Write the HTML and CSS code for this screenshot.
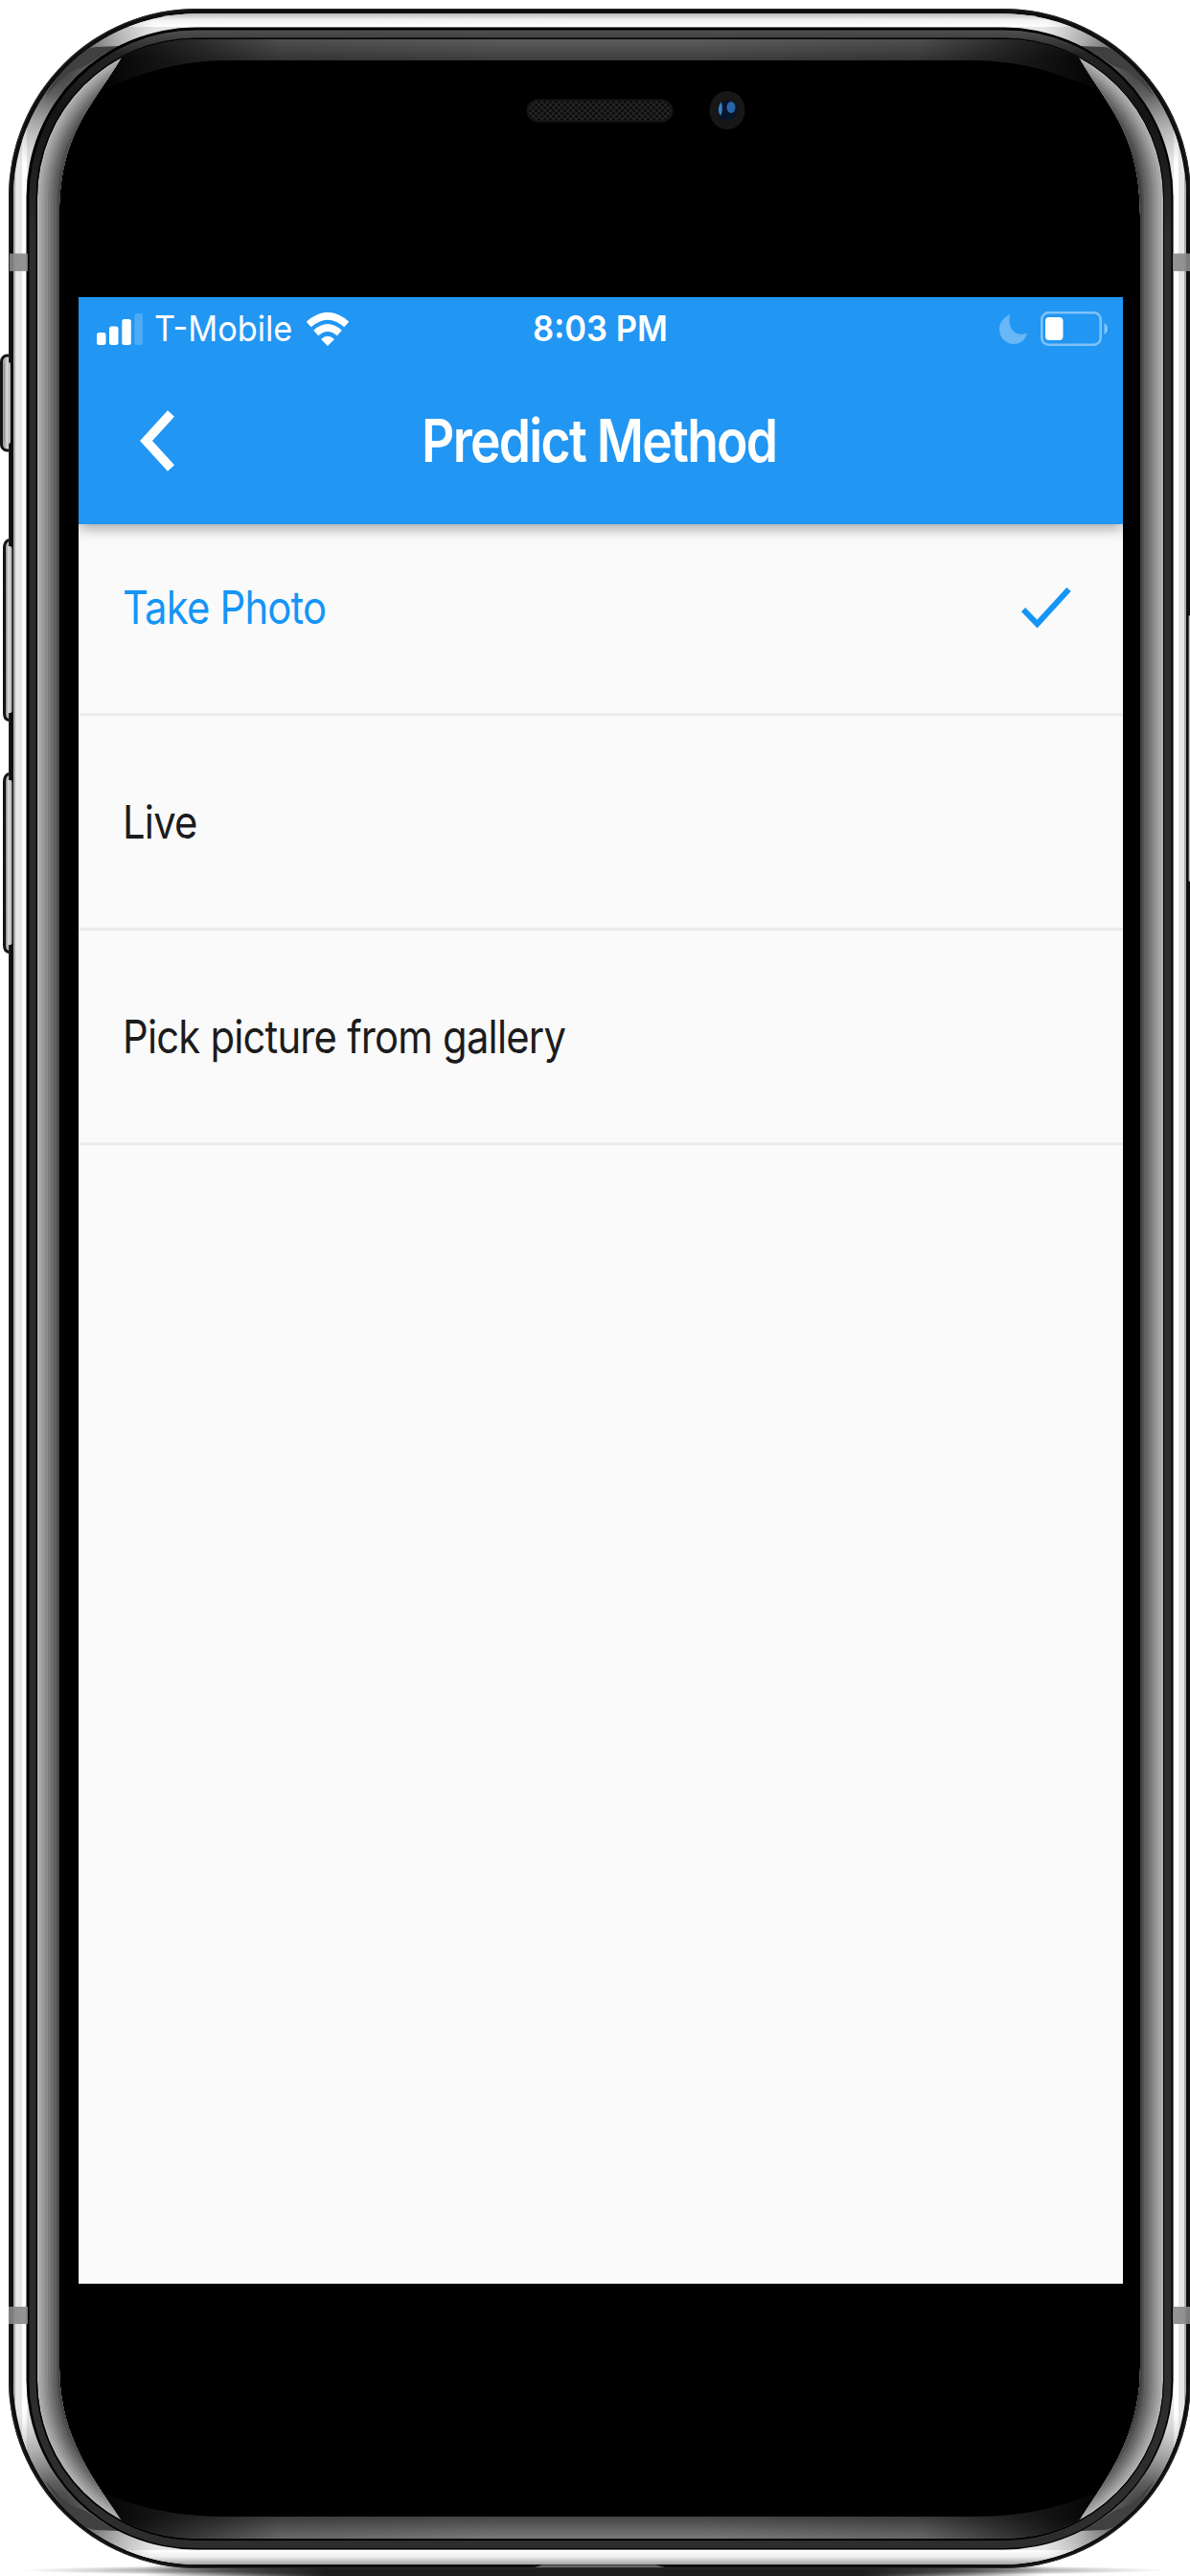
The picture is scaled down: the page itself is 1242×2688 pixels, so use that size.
FILE: index.html
```html
<!DOCTYPE html>
<html lang="en">
<head>
<meta charset="utf-8">
<title>Predict Method</title>
<link rel="stylesheet" href="styles.css">
</head>
<body>
<div class="phone">
  <svg class="phone-frame" viewBox="0 0 1242 2688" aria-hidden="true">
    <defs>
      <linearGradient id="btn"><stop offset="0" stop-color="#888"/><stop offset=".45" stop-color="#ddd"/><stop offset="1" stop-color="#aaa"/></linearGradient>
      <radialGradient id="corner"><stop offset="0" stop-color="#222" stop-opacity=".95"/><stop offset=".3" stop-color="#333" stop-opacity=".75"/><stop offset="1" stop-color="#888" stop-opacity="0"/></radialGradient>
      <radialGradient id="ground"><stop offset="0" stop-color="#555"/><stop offset=".65" stop-color="#777"/><stop offset="1" stop-color="#999" stop-opacity="0"/></radialGradient>
      <linearGradient id="groundCore"><stop offset="0" stop-color="#1e1e1e" stop-opacity="0"/><stop offset=".2" stop-color="#1e1e1e"/><stop offset=".8" stop-color="#1e1e1e"/><stop offset="1" stop-color="#1e1e1e" stop-opacity="0"/></linearGradient>
      <linearGradient id="topGlass" x1="0" y1="41" x2="0" y2="63" gradientUnits="userSpaceOnUse"><stop offset="0" stop-color="#5c5c5c"/><stop offset="1" stop-color="#3c3c3c"/></linearGradient>
      <linearGradient id="botGlass" x1="0" y1="2626" x2="0" y2="2649" gradientUnits="userSpaceOnUse"><stop offset="0" stop-color="#444"/><stop offset="1" stop-color="#7a7a7a"/></linearGradient>
      <linearGradient id="fade" x1="118" y1="0" x2="1134" y2="0" gradientUnits="userSpaceOnUse"><stop offset="0" stop-color="#000" stop-opacity=".9"/><stop offset=".17" stop-color="#000" stop-opacity=".15"/><stop offset=".4" stop-color="#000" stop-opacity="0"/><stop offset=".6" stop-color="#000" stop-opacity="0"/><stop offset=".83" stop-color="#000" stop-opacity=".15"/><stop offset="1" stop-color="#000" stop-opacity=".9"/></linearGradient>
      <linearGradient id="band" x1="0" y1="31" x2="0" y2="250" gradientUnits="userSpaceOnUse"><stop offset="0" stop-color="#505050"/><stop offset=".12" stop-color="#222"/><stop offset=".4" stop-color="#141414"/><stop offset="1" stop-color="#2d2d2d"/></linearGradient>
      <linearGradient id="steelTop" x1="0" y1="14" x2="0" y2="28" gradientUnits="userSpaceOnUse"><stop offset="0" stop-color="#bbb"/><stop offset=".5" stop-color="#f2f2f2"/><stop offset="1" stop-color="#fff"/></linearGradient>
      <linearGradient id="steelBot" x1="0" y1="2661" x2="0" y2="2675" gradientUnits="userSpaceOnUse"><stop offset="0" stop-color="#fff"/><stop offset=".5" stop-color="#eee"/><stop offset="1" stop-color="#aaa"/></linearGradient>
      <clipPath id="steel"><rect x="14" y="14.3" width="1224" height="2661.5" rx="191"/></clipPath>
      <clipPath id="glass"><rect x="39" y="41" width="1175" height="2608" rx="165"/></clipPath>
      <clipPath id="sides">
        <path d="M30 30H145L127 60C95 112 62 140 62 225V2470C62 2545 100 2590 126 2629L145 2660H30Z"/>
        <path d="M1222 30H1107L1126 60C1157 112 1190 140 1190 225V2470C1190 2545 1152 2590 1127 2629L1107 2660H1222Z"/>
      </clipPath>
      <pattern id="mesh" width="6" height="6" patternUnits="userSpaceOnUse"><rect width="6" height="6" fill="#222"/><circle cx="1.5" cy="1.5" r="1.4" fill="#090909"/><circle cx="4.5" cy="4.5" r="1.4" fill="#090909"/></pattern>
      <g id="facet">
        <circle cx="58" cy="66" r="110" fill="url(#corner)"/>
        <path d="M48 100C62 76 78 52 100 49L125 48L109 56C99 63 91 69 81 72C69 76 62 84 48 100Z" fill="#404040"/>
      </g>
    </defs>
    <ellipse cx="620" cy="2682" rx="600" ry="7" fill="url(#ground)"/>
    <rect x="150" y="2675" width="940" height="13" fill="url(#groundCore)"/>
    <g stroke="#141414" stroke-width="3" fill="url(#btn)">
      <rect x="1.5" y="371" width="16" height="99" rx="6"/>
      <path d="M18 562L8 564Q4.500 566 4.500 572V744Q4.500 750 8 751L18 754Z"/>
      <path d="M18 806L8 808Q4.500 810 4.500 816V986Q4.500 992 8 993L18 997Z"/>
    </g>
    <rect x="9" y="9" width="1234" height="2671" rx="196" fill="#0f0f0f"/>
    <rect x="9.500" y="9.500" width="1233" height="2670" rx="196" fill="none" stroke="#2a2a2a"/>
    <g fill="url(#btn)"><rect x="4" y="378" width="7" height="85" rx="2"/><rect x="6" y="570" width="6.500" height="174" rx="2"/><rect x="6" y="814" width="6.500" height="172" rx="2"/><rect x="1240.500" y="642" width="3" height="278" rx="2"/></g>
    <g clip-path="url(#steel)">
      <rect x="14" y="14" width="1224" height="2662" fill="#e6e6e6"/>
      <rect x="14" y="14" width="2" height="2662" fill="#aaa"/><rect x="23" y="14" width="5" height="2662" fill="#fff"/>
      <rect x="1225" y="14" width="5" height="2662" fill="#fff"/><rect x="1236" y="14" width="2" height="2662" fill="#aaa"/>
      <rect x="100" y="14" width="1052" height="14" fill="url(#steelTop)"/>
      <rect x="100" y="2661" width="1052" height="15" fill="url(#steelBot)"/>
      <use href="#facet"/><use href="#facet" transform="translate(1252 0) scale(-1 1)"/>
      <use href="#facet" transform="translate(0 2689) scale(1 -1)"/><use href="#facet" transform="translate(1252 2689) scale(-1 -1)"/>
    </g>
    <rect x="27.500" y="28.500" width="1197" height="2632" rx="177"/>
    <rect x="30.500" y="31.500" width="1192" height="2627.500" rx="174" fill="url(#band)"/>
    <rect x="37.500" y="39.500" width="1177.500" height="2611.500" rx="167"/>
    <g clip-path="url(#glass)">
      <path d="M110 40H1142V92C1100 76 1070 63 1010 63H240C185 63 150 76 110 92Z" fill="url(#topGlass)"/>
      <path d="M110 2650H1142V2602C1100 2618 1070 2626 1010 2626H240C185 2626 150 2618 110 2602Z" fill="url(#botGlass)"/>
      <rect x="38" y="40" width="1177" height="70" fill="url(#fade)"/><rect x="38" y="2590" width="1177" height="62" fill="url(#fade)"/>
      <g clip-path="url(#sides)">
        <rect x="39" y="41" width="1175" height="2608" rx="165" fill="#b2b2b2"/>
        <rect x="41" y="43" width="1171" height="2604" rx="163" fill="#a6a6a6"/>
        <rect x="44" y="46" width="1165" height="2598" rx="160" fill="#999"/>
        <rect x="47" y="49" width="1159" height="2592" rx="157" fill="#8b8b8b"/>
        <rect x="50" y="52" width="1153" height="2586" rx="154" fill="#7c7c7c"/>
        <rect x="53" y="55" width="1147" height="2580" rx="151" fill="#6d6d6d"/>
        <rect x="56" y="58" width="1141" height="2574" rx="148" fill="#606060"/>
        <rect x="59" y="61" width="1135" height="2568" rx="145" fill="#505050"/>
        <rect x="61" y="67" width="1131" height="2556" rx="143" fill="#404040"/>
      </g>
    </g>
    <g fill="#888" fill-opacity=".9"><rect x="10" y="264.500" width="19" height="18.500"/><rect x="1224" y="264.500" width="18" height="18.500"/><rect x="9" y="2407" width="20" height="18"/><rect x="1224" y="2407" width="18" height="18"/></g>
    <path d="M558 2679L566 2676.500H684L694 2679Z" fill="#666"/>
    <rect x="550.500" y="104.500" width="151" height="22" rx="11" fill="url(#mesh)" stroke="#151515" stroke-width="2"/>
    <ellipse cx="759" cy="115" rx="18.500" ry="20" fill="#171717"/><circle cx="759" cy="115" r="10.500" fill="#06152b"/>
    <path d="M753 106Q747 114 752 121Q755 116 753 106Z" fill="#3c80bd"/><ellipse cx="763" cy="112" rx="4.500" ry="6" fill="#2765a8"/>
  </svg>
  <main class="screen">
    <header class="app-header">
      <div class="status-bar">
        <div class="status-left">
          <svg class="signal" viewBox="0 0 48 33"><g fill="#fff"><rect y="20" width="9.500" height="13" rx="2.500"/><rect x="13" y="13.500" width="9.500" height="19.500" rx="2.500"/><rect x="26.300" y="6" width="9.500" height="27" rx="2.500"/><rect x="39.300" width="9" height="33" rx="2.500" opacity=".2"/></g></svg>
          <span class="fit carrier"><span>T-Mobile</span></span>
          <svg class="wifi" viewBox="0 0 44 35"><g fill="none" stroke="#fff" stroke-width="7.500"><path d="M2.200 12.500Q22-5 41.800 12.500"/><path d="M9.700 21.500Q22 10.500 34.300 21.500"/></g><path d="M15 28Q22 21.500 29 28L22 35Z" fill="#fff"/></svg>
        </div>
        <span class="fit time"><span>8:03 PM</span></span>
        <div class="status-right">
          <svg class="moon" viewBox="0 0 29 31"><path d="M11 0C5 3 0 8 0 15.500C0 24 6.500 31 15 31C22 31 27.500 26.500 29 19.500C19 24 8 17 11 0Z" fill="#fff" opacity=".32"/></svg>
          <svg class="battery" viewBox="0 0 70 36"><rect x="1.300" y="1.300" width="61.400" height="33.400" rx="7" fill="none" stroke="#fff" stroke-opacity=".42" stroke-width="2.600"/><rect x="5" y="6" width="18.500" height="24" rx="4" fill="#fff"/><path d="M66.500 12Q70 14 70 18T66.500 24Z" fill="#fff" opacity=".45"/></svg>
        </div>
      </div>
      <div class="nav-bar">
        <svg class="back" viewBox="0 0 36 64"><path d="M32.500 3.500L6.500 32L32.500 60.500" fill="none" stroke="#fff" stroke-width="9.500"/></svg>
        <h1 class="fit title"><span>Predict Method</span></h1>
      </div>
    </header>
    <ul class="options">
      <li class="option selected"><span class="fit label"><span>Take Photo</span></span><svg class="check" viewBox="0 0 52 43"><path d="M2 23L16.500 38L49.500 2" fill="none" stroke="#1595f6" stroke-width="6"/></svg></li>
      <li class="option"><span class="fit label"><span>Live</span></span></li>
      <li class="option"><span class="fit label"><span>Pick picture from gallery</span></span></li>
    </ul>
  </main>
</div>
</body>
</html>
```
FILE: styles.css
```css
* { box-sizing: border-box; }
body { margin: 0; background: #fff; font-family: Inter, "Liberation Sans", sans-serif; }
.phone { position: relative; width: 1242px; height: 2688px; padding: 310px 70px 305px 82px; overflow: hidden; }
.phone-frame { position: absolute; inset: 0; width: 1242px; height: 2688px; }
.screen { position: relative; display: flex; flex-direction: column; height: 2073px; background: #fafafa; }
svg { display: block; flex: none; }
.app-header { height: 237px; background: #2196f3; color: #fff; box-shadow: 0 4px 14px rgba(0,0,0,.36); clip-path: inset(0 0 -30px 0); }
.status-bar { display: grid; grid-template-columns: 1fr auto 1fr; align-items: center; height: 66px; padding: 0 16px 0 19px; }
.status-left, .status-right { display: flex; align-items: center; }
.status-right { justify-content: flex-end; gap: 14px; }
.signal { width: 48px; height: 33px; margin-right: 12px; }
.wifi { width: 44px; height: 35px; margin-left: 15px; }
.moon { width: 29px; height: 31px; }
.battery { width: 70px; height: 36px; }
.fit { display: block; white-space: nowrap; }
.fit span { display: inline-block; transform-origin: left center; }
.carrier { width: 144px; font-size: 37px; line-height: 66px; }
.carrier span { transform: scaleX(.925); }
.time { width: 145px; font-size: 37px; font-weight: 600; line-height: 66px; }
.time span { transform: scaleX(.935); }
.nav-bar { display: flex; align-items: center; height: 168px; padding-left: 64px; }
.back { width: 36px; height: 64px; }
.title { width: 372px; margin: 0 0 0 258px; font-size: 62px; font-weight: 600; letter-spacing: -2px; line-height: 80px; }
.title span { transform: scaleX(.86); }
.options { margin: 0; padding: 0; list-style: none; }
.option { display: flex; align-items: center; justify-content: space-between; height: 224px; padding: 0 54px 0 46px; border-bottom: 3px solid #ebebeb; color: #1c1c1c; }
.option:first-child { height: 200px; padding-bottom: 24px; }
.label { font-size: 48px; font-weight: 400; letter-spacing: -.9px; line-height: 60px; }
.label span { transform: scaleX(.87); }
.selected { color: #1595f6; }
.check { position: relative; top: 1px; width: 52px; height: 43px; }
```
